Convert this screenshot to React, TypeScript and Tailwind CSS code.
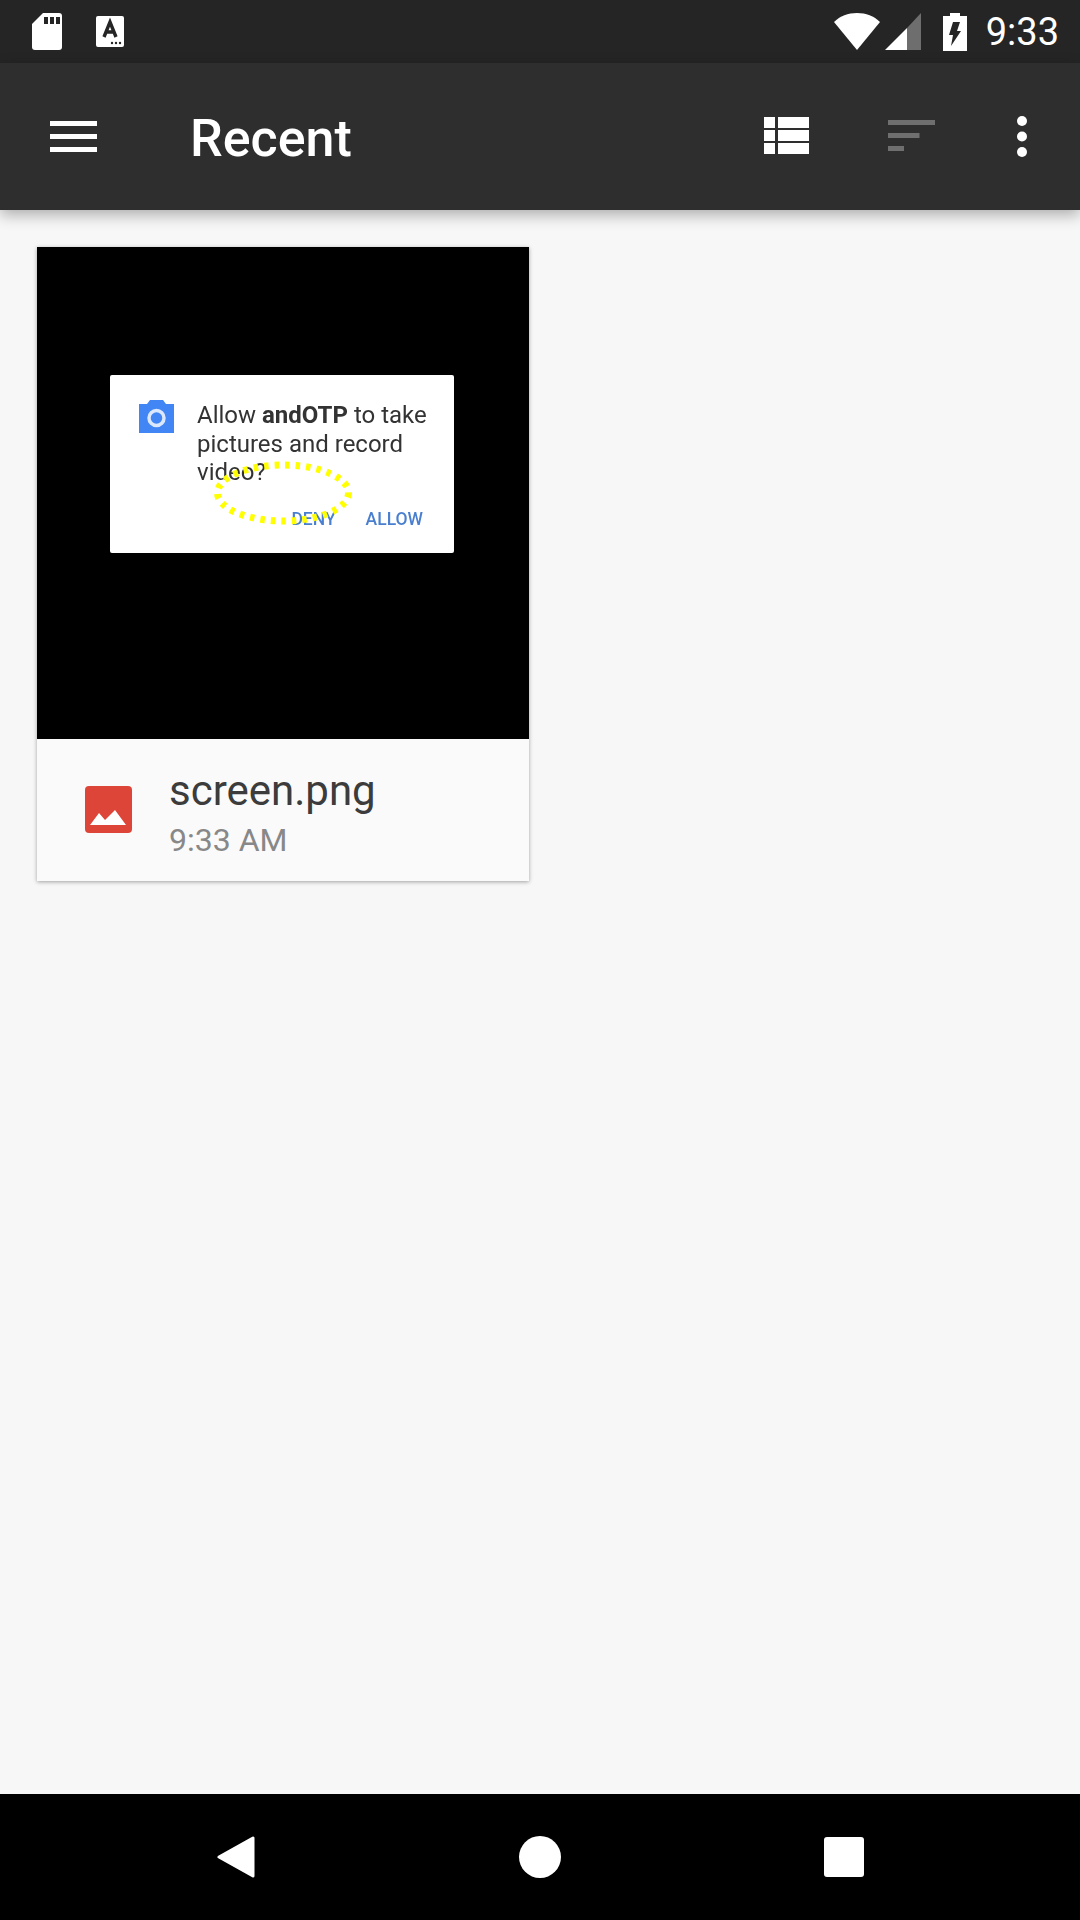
const StatusLeft = () => (
    <>
        <svg width="30" height="37" viewBox="0 0 30 37" className="ml-[32px] shrink-0">
            <path fill="#fff" d="M11 0H27a3 3 0 0 1 3 3V34a3 3 0 0 1-3 3H3a3 3 0 0 1-3-3V11Z" />
            <rect x="12" y="4" width="4" height="7" fill="#252525" />
            <rect x="18" y="4" width="4" height="7" fill="#252525" />
            <rect x="24" y="4" width="4" height="7" fill="#252525" />
        </svg>
        <svg width="28" height="31" viewBox="0 0 28 31" className="ml-[34px] shrink-0">
            <rect width="28" height="31" rx="2" fill="#fff" />
            <path fill="none" stroke="#252525" strokeWidth="3.4" d="M8 21 14 6l6 15M10 16h8" />
            <circle cx="16" cy="27" r="1.2" fill="#252525" />
            <circle cx="20" cy="27" r="1.2" fill="#252525" />
            <circle cx="24" cy="27" r="1.2" fill="#252525" />
        </svg>
    </>
);

const StatusRight = () => (
    <>
        <svg width="46" height="37" viewBox="0 0 46 37" className="ml-auto shrink-0">
            <path fill="#fff" d="M0 9C6 3 14 0 23 0s17 3 23 9L23 37Z" />
        </svg>
        <svg width="36" height="37" viewBox="0 0 36 37" className="ml-[5px] shrink-0">
            <path fill="#fff" d="M0 37 22 15V37Z" />
            <path fill="#6e6e6e" d="M22 15 36 0V37H22Z" />
        </svg>
        <svg width="24" height="38" viewBox="0 0 24 38" className="ml-[22px] shrink-0">
            <path fill="#fff" d="M7 0H17V3H24V38H0V3H7Z" />
            <path fill="#252525" d="M10 9H17L14 18H18L8 33 10 22H6Z" />
        </svg>
    </>
);

const Hamburger = () => (
    <svg width="47" height="31" viewBox="0 0 47 31" className="ml-[50px] shrink-0">
        <rect width="47" height="5" fill="#fff" />
        <rect y="13" width="47" height="5" fill="#fff" />
        <rect y="26" width="47" height="5" fill="#fff" />
    </svg>
);

const ListIcon = () => (
    <svg width="45" height="37" viewBox="0 0 45 37" className="mb-[2px] ml-auto shrink-0">
        <g fill="#fff">
            <rect width="11" height="11" />
            <rect x="14" width="31" height="11" />
            <rect y="13" width="11" height="11" />
            <rect x="14" y="13" width="31" height="11" />
            <rect y="26" width="11" height="11" />
            <rect x="14" y="26" width="31" height="11" />
        </g>
    </svg>
);

const SortIcon = () => (
    <svg width="47" height="31" viewBox="0 0 47 31" className="mb-[2px] ml-[79px] shrink-0">
        <g fill="#6f6f6f">
            <rect width="47" height="5" />
            <rect y="13" width="31.5" height="5" />
            <rect y="26" width="16" height="5" />
        </g>
    </svg>
);

const DotsIcon = () => (
    <svg width="10" height="41" viewBox="0 0 10 41" className="ml-[82px] mr-[53px] shrink-0">
        <circle cx="5" cy="5" r="5" fill="#fff" />
        <circle cx="5" cy="20.5" r="5" fill="#fff" />
        <circle cx="5" cy="36" r="5" fill="#fff" />
    </svg>
);

const PermissionDialog = () => (
    <div className="relative h-[178px] w-[344px] rounded-[2px] bg-white font-['Roboto',sans-serif] text-[#333]">
        <div className="flex pl-[29px] pt-[25px]">
            <svg width="35" height="33" viewBox="0 0 35 33" className="shrink-0 blur-[0.4px]">
                <path fill="#4285f4" d="M11 0H24L27 4H35V33H0V4H8Z" />
                <circle cx="17.5" cy="18" r="7.5" fill="none" stroke="#dbe8fd" strokeWidth="3.5" />
            </svg>
            <p className="ml-[23px] mt-[1px] w-[245px] text-[24px] leading-[28.5px] blur-[0.7px]">
                Allow <b className="font-bold">andOTP</b> to take pictures and record video?
            </p>
        </div>
        <div className="mt-[22px] flex justify-end gap-[30px] pr-[31px] text-[17.5px] leading-[20px] font-medium text-[#4a7fd0] blur-[0.7px]">
            <span>DENY</span>
            <span>ALLOW</span>
        </div>
        <svg width="146" height="70" viewBox="0 0 146 70" className="absolute left-[100px] top-[83px]">
            <ellipse cx="73" cy="35" rx="65.5" ry="28" fill="none" stroke="#ffff00" strokeWidth="7" strokeDasharray="4.5 6" />
        </svg>
    </div>
);

const FileCard = () => (
    <div className="w-[492px] shadow-[0_1px_4px_rgba(0,0,0,0.35)]">
        <div className="h-[492px] bg-black pl-[73px] pt-[128px]">
            <PermissionDialog />
        </div>
        <div className="flex h-[142px] items-center bg-[#fafafa]">
            <svg width="47" height="47" viewBox="0 0 47 47" className="mb-[1px] ml-[48px] shrink-0">
                <rect width="47" height="47" rx="4" fill="#dd4539" />
                <path fill="#fff" d="M5 39 14 27 20 34 30 24 41 39Z" />
            </svg>
            <div className="ml-[37px] flex flex-col self-start pt-[29px]">
                <span className="text-[42px] leading-[46px] text-[#3c3c3c]">screen.png</span>
                <span className="mt-[7px] text-[32px] leading-[38px] text-[#888888]">9:33 AM</span>
            </div>
        </div>
    </div>
);

const NavBar = () => (
    <div className="flex h-[126px] items-center bg-black">
        <svg width="38" height="42" viewBox="0 0 38 42" className="ml-[217px] shrink-0">
            <path fill="#fff" stroke="#fff" strokeWidth="3" strokeLinejoin="round" d="M36 2V40L2 21Z" />
        </svg>
        <div className="ml-[264px] h-[42px] w-[42px] rounded-full bg-white" />
        <div className="ml-[263px] h-[40px] w-[40px] rounded-[3px] bg-white" />
    </div>
);

export default function App() {
    return (
        <div className="flex h-[1920px] w-[1080px] flex-col overflow-hidden bg-[#f7f7f7] font-['Roboto',sans-serif]">
            <div className="flex h-[63px] items-center bg-[#252525]">
                <StatusLeft />
                <StatusRight />
                <span className="ml-[19px] mr-[21px] text-[38px] leading-none text-white">9:33</span>
            </div>
            <div className="z-10 flex h-[147px] items-center bg-[#2e2e2e] shadow-[0_5px_14px_rgba(0,0,0,0.3)]">
                <Hamburger />
                <h1 className="ml-[93px] pt-[5px] text-[52px] font-medium leading-none text-white">Recent</h1>
                <ListIcon />
                <SortIcon />
                <DotsIcon />
            </div>
            <main className="flex-1 pl-[37px] pt-[37px]">
                <FileCard />
            </main>
            <NavBar />
        </div>
    );
}
